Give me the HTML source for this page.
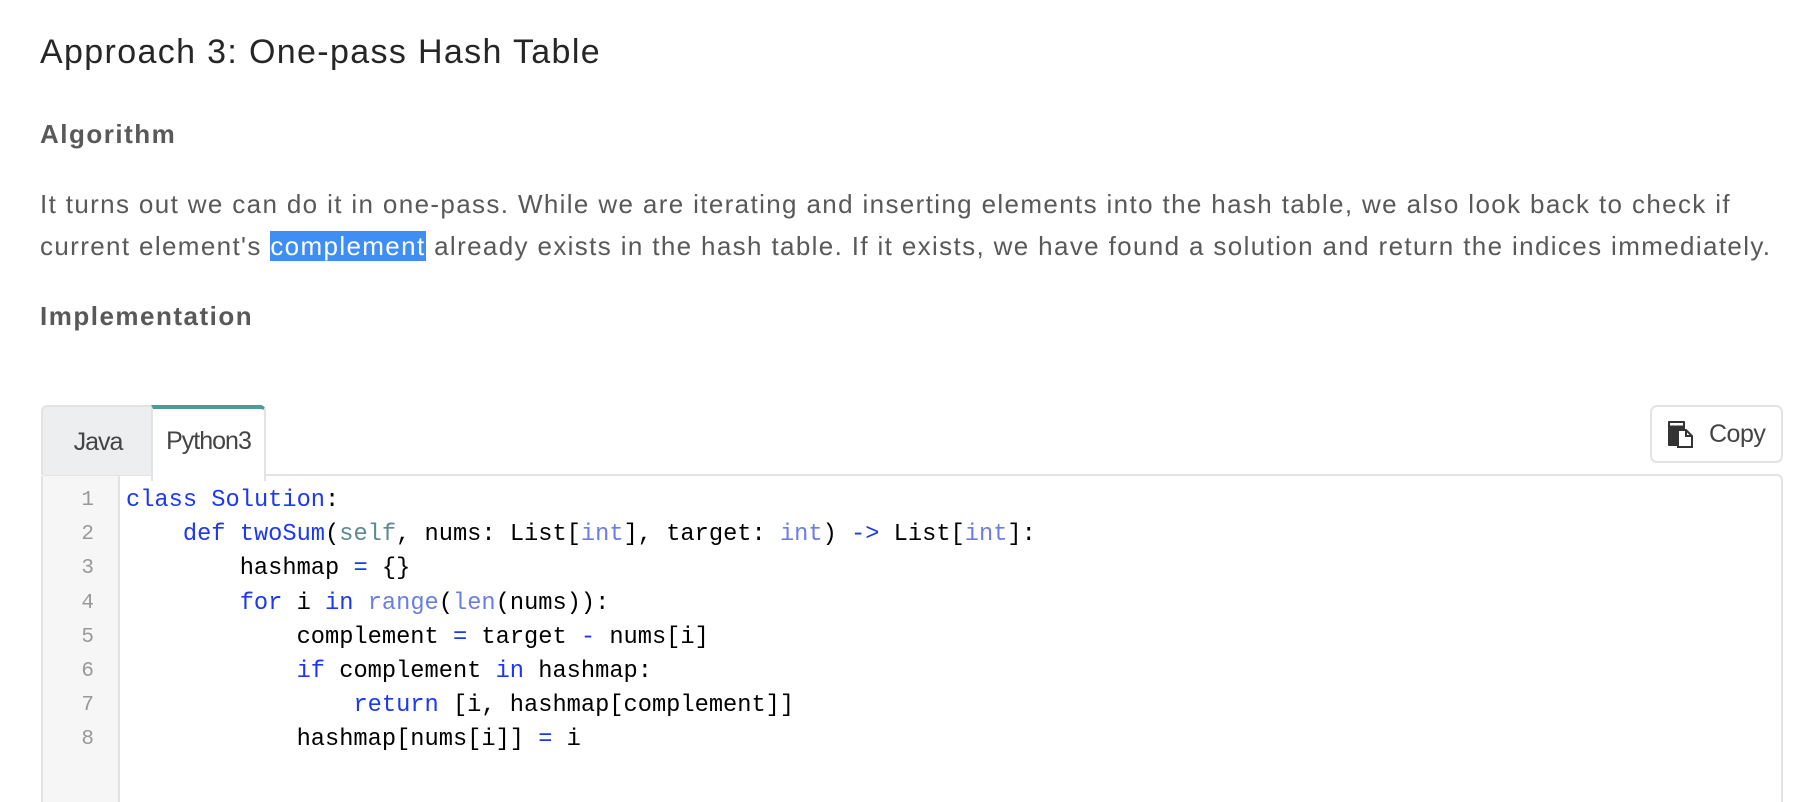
<!DOCTYPE html>
<html><head><meta charset="utf-8">
<style>
html,body{margin:0;padding:0;background:#fff;width:1814px;height:802px;overflow:hidden}
body{font-family:"Liberation Sans",Arial,sans-serif;position:relative}
.h{position:absolute;left:40px;top:33px;font-size:34px;color:#262626;white-space:nowrap;letter-spacing:1.35px}
.b{position:absolute;left:40px;font-size:26px;font-weight:bold;color:#595959;white-space:nowrap;letter-spacing:1.5px}
.p{position:absolute;left:40px;top:183px;font-size:26px;line-height:42px;color:#595959;white-space:nowrap;letter-spacing:1.36px}
.hl{background:#3f8ef5;color:#fff}
.box{position:absolute;left:41px;top:474px;width:1738px;height:340px;border:2px solid #e3e3e3;border-radius:6px 6px 0 0;background:#fff}
.gut{position:absolute;left:41px;top:476px;width:75px;height:330px;background:#f6f6f6;border-right:2px solid #e3e3e3;border-left:2px solid #e3e3e3}
.tabs{position:absolute;left:41px;top:405px;height:70px}
.java{position:absolute;left:0;top:0;width:110px;height:68px;background:#eceeef;border:2px solid #e3e3e3;border-radius:6px 0 0 0;border-bottom:none;font-size:25px;color:#444;text-align:center;line-height:70px;letter-spacing:-1px}
.py{position:absolute;left:110px;top:0;width:111px;height:72px;background:#fff;border:2px solid #e3e3e3;border-top:4px solid #4a9d95;border-bottom:none;border-radius:0 6px 0 0;font-size:25px;color:#444;text-align:center;line-height:64px;letter-spacing:-1px}
.copy{position:absolute;left:1650px;top:405px;width:129px;height:54px;border:2px solid #e3e3e3;border-radius:7px;font-size:25px;color:#444;letter-spacing:-0.5px}
.copy span{position:absolute;left:57px;top:13px}
.code{position:absolute;left:126px;top:484px;font-family:"Liberation Mono",monospace;font-size:23.7px;line-height:34.2px;color:#000;white-space:pre}
.ln{position:absolute;left:60px;width:34px;top:484px;font-family:"Liberation Mono",monospace;font-size:21px;line-height:34.2px;color:#999;text-align:right;white-space:pre}
.k{color:#1c38f0}.s{color:#5b8a8f}.t{color:#6a7ee6}
</style></head><body>
<div class="h">Approach 3: One-pass Hash Table</div>
<div class="b" style="top:119px">Algorithm</div>
<div class="p">It turns out we can do it in one-pass. While we are iterating and inserting elements into the hash table, we also look back to check if<br>current element's <span class="hl">complement</span> already exists in the hash table. If it exists, we have found a solution and return the indices immediately.</div>
<div class="b" style="top:301px">Implementation</div>
<div class="box"></div>
<div class="gut"></div>
<div class="tabs"><div class="java">Java</div><div class="py">Python3</div></div>
<div class="copy"><svg style="position:absolute;left:15px;top:13px" width="30" height="28" viewBox="0 0 30 28"><rect x="1" y="1" width="17" height="25" rx="1" fill="#333"/><rect x="3" y="3" width="13" height="2.5" fill="#fff"/><path d="M11 10h8l6 6v11H11z" fill="#fff" stroke="#333" stroke-width="2"/><path d="M19 10v6h6" fill="none" stroke="#333" stroke-width="2"/></svg><span>Copy</span></div>
<div class="ln">1
2
3
4
5
6
7
8</div>
<div class="code"><span class="k">class</span> <span class="k">Solution</span>:
    <span class="k">def</span> <span class="k">twoSum</span>(<span class="s">self</span>, nums: List[<span class="t">int</span>], target: <span class="t">int</span>) <span class="k">-&gt;</span> List[<span class="t">int</span>]:
        hashmap <span class="k">=</span> {}
        <span class="k">for</span> i <span class="k">in</span> <span class="t">range</span>(<span class="t">len</span>(nums)):
            complement <span class="k">=</span> target <span class="k">-</span> nums[i]
            <span class="k">if</span> complement <span class="k">in</span> hashmap:
                <span class="k">return</span> [i, hashmap[complement]]
            hashmap[nums[i]] <span class="k">=</span> i</div>
</body></html>
